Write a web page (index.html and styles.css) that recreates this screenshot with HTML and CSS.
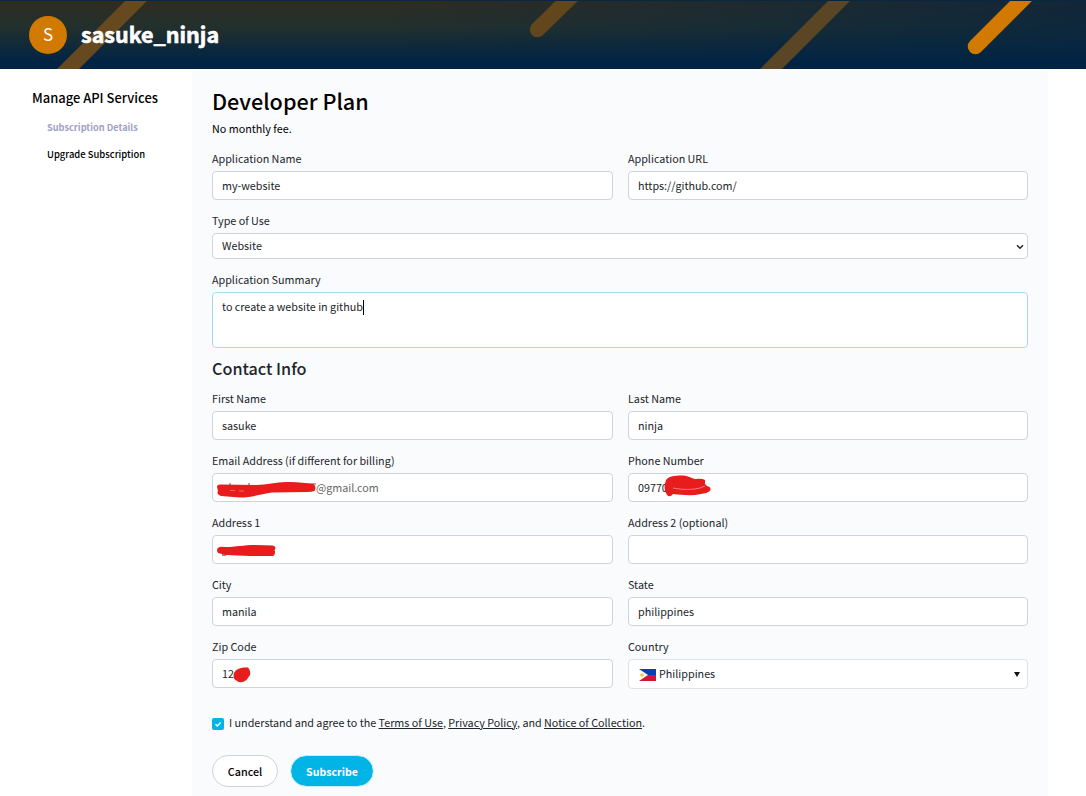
FILE: index.html
```html
<!DOCTYPE html>
<html lang="en">
<head>
    <meta charset="UTF-8">
    <meta name="viewport" content="width=device-width, initial-scale=1.0">
    <title>Developer Plan</title>
    <link rel="stylesheet" href="styles.css">
</head>
<body>
    <header class="banner">
        <svg class="stripes" width="1086" height="69" viewBox="0 0 1086 69">
            <g stroke-width="15.5" stroke-linecap="round">
                <path d="M148 -11L56 81" stroke="#66491f"/>
                <path d="M582 -14L537.500 29.500" stroke="#62461c"/>
                <path d="M851 -11L759 81" stroke="#5a4524"/>
                <path d="M1036 -14L975.500 46.500" stroke="#d27a00"/>
            </g>
            <path d="M0 .5H1086" stroke="#092740"/>
        </svg>
        <div class="avatar">S</div>
        <div class="username">sasuke_ninja</div>
    </header>

    <div class="layout">
        <nav class="sidebar">
            <h3>Manage API Services</h3>
            <a class="active">Subscription Details</a>
            <a>Upgrade Subscription</a>
        </nav>

        <main class="panel">
            <h1>Developer Plan</h1>
            <p class="fee">No monthly fee.</p>

            <form>
                <div class="row">
                    <div class="field">
                        <label for="appName">Application Name</label>
                        <input type="text" id="appName" value="my-website">
                    </div>
                    <div class="field">
                        <label for="appUrl">Application URL</label>
                        <input type="text" id="appUrl" value="https://github.com/">
                    </div>
                </div>

                <div class="field">
                    <label>Type of Use</label>
                    <div class="select">
                        <span>Website</span>
                        <svg width="8" height="6" viewBox="0 0 8 6"><path d="M1 1.200L4 4.200L7 1.200" fill="none" stroke="#222" stroke-width="1.400"/></svg>
                    </div>
                </div>

                <div class="field summary-field">
                    <label>Application Summary</label>
                    <div class="summary">to create a website in github<span class="caret"></span></div>
                </div>

                <h2>Contact Info</h2>

                <div class="row">
                    <div class="field">
                        <label for="first">First Name</label>
                        <input type="text" id="first" value="sasuke">
                    </div>
                    <div class="field">
                        <label for="last">Last Name</label>
                        <input type="text" id="last" value="ninja">
                    </div>
                </div>

                <div class="row">
                    <div class="field">
                        <label for="email">Email Address (if different for billing)</label>
                        <input type="text" id="email" value="@gmail.com">
                        <svg class="mark" width="110" height="29" viewBox="0 0 110 29"><path d="M5 14Q5 11 9 11.500L44 12C55 12 64 9 74 9C84 8.500 94 10 101 10.500Q105 14 102.500 18Q100 19 95 19L60 19.500C49 21 40 24.500 28 24.500L9 23Q4 21 6 18Z" fill="#e81c1c"/><path d="M18 10V12M37 10V12M101 11H104" stroke="#555"/><path d="M18 17.500H23M27 18H32" stroke="#f4a0a0" stroke-width=".6"/></svg>
                    </div>
                    <div class="field">
                        <label for="phone">Phone Number</label>
                        <input type="text" id="phone" value="09770">
                        <svg class="mark" width="110" height="29" viewBox="0 0 110 29"><path d="M37.500 9C38 4 44 3 51 2.500C59 2 62 4.500 67 6Q74 5 77 7V11L79 13Q84 14 82 18Q78 21 73 21C64 23 55 22 45 21Q42 25 39 22L37 18Q36 12 37.500 9Z" fill="#e81c1c"/><path d="M45 15Q60 18 72 15L77 13" fill="none" stroke="#f7a0a0" stroke-width=".7"/></svg>
                    </div>
                </div>

                <div class="row">
                    <div class="field">
                        <label for="address1">Address 1</label>
                        <input type="text" id="address1">
                        <svg class="mark" width="110" height="29" viewBox="0 0 110 29"><path d="M10 20H14" stroke="#222"/><path d="M6 13Q8 11 13 12C24 12 32 10 43 10L61 10.500Q65 12 62.500 15Q64 19 61 21H38L14 20L6 18Q4 15 6 13Z" fill="#e81c1c"/></svg>
                    </div>
                    <div class="field">
                        <label for="address2">Address 2 (optional)</label>
                        <input type="text" id="address2">
                    </div>
                </div>

                <div class="row">
                    <div class="field">
                        <label for="city">City</label>
                        <input type="text" id="city" value="manila">
                    </div>
                    <div class="field">
                        <label for="state">State</label>
                        <input type="text" id="state" value="philippines">
                    </div>
                </div>

                <div class="row">
                    <div class="field">
                        <label for="zip">Zip Code</label>
                        <input type="text" id="zip" value="12">
                        <svg class="mark" width="110" height="29" viewBox="0 0 110 29"><path d="M22 14C24 9 31 8 36 8.500Q39 12 38 16Q36 19 34.500 21Q29 25 25 22Q20 19 22 14Z" fill="#e81c1c"/></svg>
                    </div>
                    <div class="field">
                        <label>Country</label>
                        <div class="country">
                            <svg class="flag" width="17" height="12" viewBox="0 0 17 12">
                                <path d="M0 0H17V6H0Z" fill="#0b3fae"/>
                                <path d="M0 6H17V12H0Z" fill="#cf1733"/>
                                <path d="M0 0L9 6L0 12Z" fill="#fff"/>
                                <circle cx="3" cy="6" r="1.800" fill="#fbc43c"/>
                            </svg>
                            <span>Philippines</span>
                            <svg class="arrow" width="6" height="5" viewBox="0 0 6 5"><path d="M0 0H6L3 5Z" fill="#111"/></svg>
                        </div>
                    </div>
                </div>

                <div class="agree">
                    <span class="checkbox"><svg width="12" height="12" viewBox="0 0 12 12"><path d="M3.500 6.200L5.300 8L8.600 4.500" fill="none" stroke="#fff" stroke-width="1.400"/></svg></span>
                    <span class="terms">I understand and agree to the <a>Terms of Use</a>, <a>Privacy Policy</a>, and <a>Notice of Collection</a>.</span>
                </div>

                <div class="actions">
                    <button type="button" class="cancel">Cancel</button>
                    <button type="button" class="subscribe">Subscribe</button>
                </div>
            </form>
        </main>
    </div>
</body>
</html>
```
FILE: styles.css
```css
* {
    box-sizing: border-box;
}
body {
    margin: 0;
    height: 796px;
    overflow: hidden;
    font-family: "Noto Sans CJK SC", "Noto Sans", sans-serif;
    font-size: 10.75px;
    color: #212529;
    background: #fff;
}
.banner {
    position: relative;
    display: flex;
    align-items: center;
    height: 69px;
    padding-left: 29px;
    color: #fff;
    background: linear-gradient(90deg, rgba(2, 36, 68, 0) 35%, rgba(2, 36, 68, .65) 100%), linear-gradient(#302c22, #22302d 40%, #022444 88%);
}
.stripes {
    position: absolute;
    left: 0;
    top: 0;
}
.avatar {
    position: relative;
    width: 38px;
    height: 38px;
    border-radius: 50%;
    background: #d27a00;
    font-size: 17px;
    line-height: 36px;
    text-align: center;
}
.username {
    position: relative;
    margin: 0 0 2px 14px;
    font-size: 21.5px;
    font-weight: 700;
    line-height: 30px;
    -webkit-text-stroke: .6px #fff;
}
.layout {
    display: flex;
    height: 727px;
}
.sidebar {
    width: 192px;
    padding: 19px 0 0 32px;
}
.sidebar h3 {
    margin: 0 0 11px;
    font-size: 12.95px;
    font-weight: 500;
    line-height: 20px;
    color: #000;
}
.sidebar a {
    display: block;
    margin: 0 0 10px 15px;
    font-size: 9.45px;
    font-weight: 500;
    line-height: 17px;
    color: #000;
}
.sidebar a.active {
    color: #a19fc6;
    font-weight: 700;
    font-size: 9.2px;
}
.panel {
    width: 856px;
    padding: 16px 20px 0;
    background: #fafbfd;
}
h1 {
    margin: 0;
    font-size: 21.6px;
    font-weight: 500;
    line-height: 32px;
    color: #000;
}
.fee {
    margin: 2px 0 11px;
    line-height: 20px;
    color: #000;
}
.row {
    display: grid;
    grid-template-columns: 401px 400px;
    column-gap: 15px;
}
.field {
    position: relative;
    margin-bottom: 12px;
}
label {
    display: block;
    margin-bottom: 3px;
    line-height: 18px;
}
input, .select, .summary, .country {
    display: block;
    width: 100%;
    height: 29px;
    padding: 0 9px;
    border: 1px solid #ced4da;
    border-radius: 4px;
    background: #fff;
    font: inherit;
    color: #212529;
}
#email {
    padding-left: 103px;
    color: #666;
}
.mark {
    position: absolute;
    left: 0;
    top: 21px;
}
.select {
    display: flex;
    align-items: center;
    justify-content: space-between;
    height: 26px;
    padding-right: 3px;
}
.select span {
    padding-bottom: 2px;
}
.select svg {
    margin-top: 1px;
}
.summary-field {
    margin-bottom: 9px;
}
.summary {
    height: 56px;
    padding-top: 5px;
    line-height: 18px;
    border-color: #9fdcec;
}
.caret {
    display: inline-block;
    width: 1px;
    height: 15px;
    vertical-align: -4px;
    background: #000;
}
h2 {
    margin: 0 0 11px;
    font-size: 16.2px;
    font-weight: 500;
    line-height: 22px;
}
.country {
    display: flex;
    align-items: center;
    height: 30px;
    padding: 0 7px 0 10px;
    border-color: #dee2e6;
}
.country span {
    margin-left: 3px;
    padding-bottom: 2px;
}
.flag {
    margin-top: 2px;
}
.arrow {
    margin-left: auto;
}
.agree {
    display: flex;
    align-items: center;
    height: 20px;
    margin-top: 12px;
}
.checkbox {
    width: 12px;
    height: 12px;
    margin-top: 2px;
    border-radius: 2px;
    background: #00b4e5;
}
.checkbox svg {
    display: block;
}
.terms {
    margin-left: 5px;
    padding-bottom: 2px;
}
.terms a {
    text-decoration: underline;
}
.actions {
    display: flex;
    gap: 12px;
    margin-top: 22px;
}
button {
    height: 32px;
    padding: 0;
    border: 1px solid #ced4da;
    border-radius: 16px;
    font: inherit;
    font-weight: 500;
}
.cancel {
    width: 66px;
    background: #fff;
    color: #000;
}
.subscribe {
    width: 84px;
    border-color: #c4edf8;
    background: #00b4e5;
    background-clip: padding-box;
    color: #fff;
    font-size: 10.6px;
    font-weight: 700;
}
```
